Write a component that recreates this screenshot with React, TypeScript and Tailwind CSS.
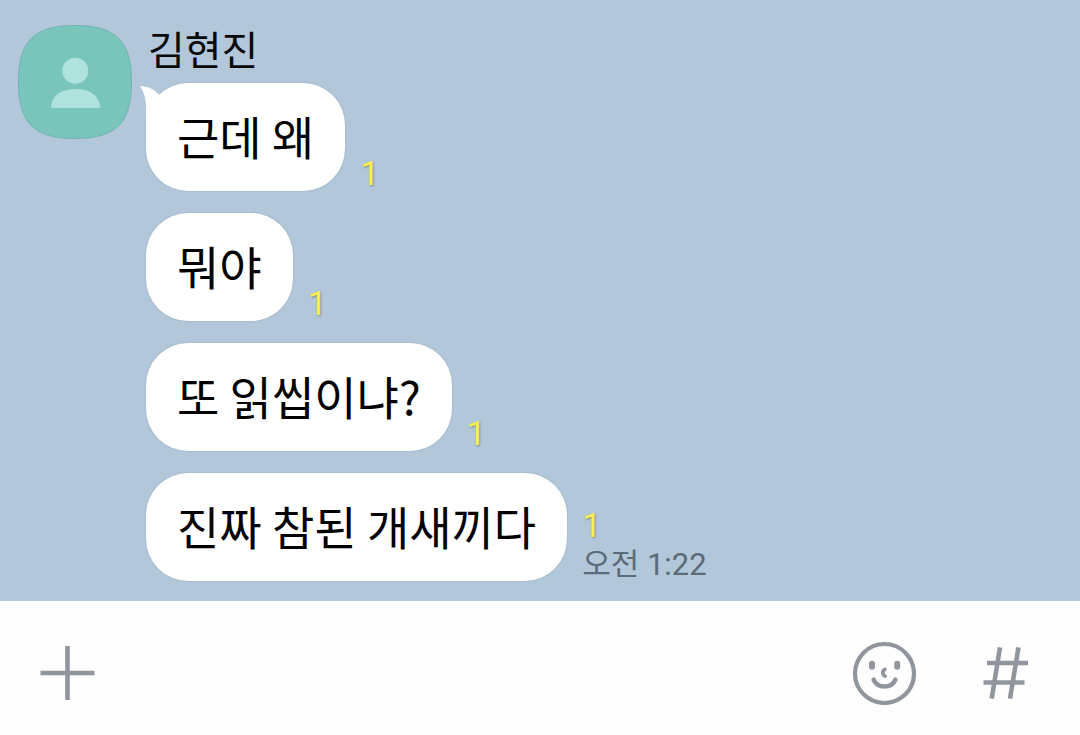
import { useState } from "react";

type Message = {
    id: number;
    text: string;
    unread: number;
    time?: string;
};

const messages: Message[] = [
    { id: 1, text: "근데 왜", unread: 1 },
    { id: 2, text: "뭐야", unread: 1 },
    { id: 3, text: "또 읽씹이냐?", unread: 1 },
    { id: 4, text: "진짜 참된 개새끼다", unread: 1, time: "오전 1:22" },
];

const Avatar = () => (
    <svg className="size-[114px] shrink-0" viewBox="0 0 114 114" aria-hidden="true">
        <path
            d="M57 .5C98 .5 113.5 16 113.5 57S98 113.5 57 113.5 .5 98 .5 57 16 .5 57 .5Z"
            fill="#7ac5bb"
            stroke="#70b3b1"
        />
        <circle cx="57.3" cy="45.8" r="13" fill="#afe2dc" />
        <path d="M33 83C33 71 43 64 57.5 64S82 71 82 83Z" fill="#afe2dc" />
    </svg>
);

// Small tail on the first bubble of a group
const Tail = () => (
    <svg className="absolute -left-1.5 top-0.5 h-10 w-6" viewBox="0 0 24 40" aria-hidden="true">
        <path d="M0 1C8 1 14 4.5 19 9.5L22 20L6 40V22C6 14 4 7 0 1Z" fill="#fff" />
    </svg>
);

const Bubble = ({ message, first }: { message: Message; first: boolean }) => (
    <li className="flex items-end gap-[15px]">
        <div className="relative rounded-[42px] bg-white px-[31px] pt-[22px] pb-[26px] shadow-[0_0_2px_rgba(90,110,130,0.35)]">
            {first && <Tail />}
            <p className="relative text-[46px] leading-[60px] text-black">{message.text}</p>
        </div>
        <div className="shrink-0 font-[Roboto,'Noto_Sans_CJK_KR',sans-serif]">
            <div className="text-[34px] leading-[36px] text-[#f7ee55] [text-shadow:1px_1px_2px_rgba(90,90,60,0.55)]">{message.unread}</div>
            {message.time && <time className="mt-1.5 block text-[31px] leading-[32px] text-[#5c6b78]">{message.time}</time>}
        </div>
    </li>
);

const InputBar = () => {
    const [input, setInput] = useState("");

    return (
        <footer className="flex items-center bg-[#fefefe] pt-10 pr-[50px] pb-[30px] pl-10 text-[#91959d]">
            <button type="button" aria-label="첨부" className="cursor-pointer">
                <svg className="size-14" viewBox="0 0 56 56" fill="none" stroke="currentColor" strokeWidth="4.6">
                    <path d="M27.5 1V55M.5 28H54.5" />
                </svg>
            </button>
            <input
                className="mx-6 h-16 min-w-0 flex-1 bg-transparent text-[40px] text-black outline-none"
                aria-label="메시지 입력"
                value={input}
                onChange={(e) => setInput(e.target.value)}
            />
            <div className="flex items-center gap-[66px]">
                <button type="button" aria-label="이모티콘" className="cursor-pointer">
                    <svg className="size-16" viewBox="0 0 64 64" fill="none" stroke="currentColor" strokeLinecap="round">
                        <circle cx="32.5" cy="32.5" r="29.5" strokeWidth="4.2" />
                        <path d="M20 22.8V25.8M45.2 22.8V25.8" strokeWidth="6" />
                        <path d="M32.8 28.5C30.2 29.5 30.2 34 33 35" strokeWidth="3.8" />
                        <path d="M21.6 38.7C25.8 47.8 39.2 47.8 43.4 38.7" strokeWidth="4.5" />
                    </svg>
                </button>
                <button type="button" aria-label="샵검색" className="cursor-pointer">
                    <svg className="h-14 w-12" viewBox="0 0 48 56" fill="none" stroke="currentColor" strokeWidth="4.6">
                        <path d="M18 2.4L9.7 53.7M36.5 2.4L28 53.7M5 18H46M1.5 37.5H42.5" />
                    </svg>
                </button>
            </div>
        </footer>
    );
};

export default function App() {
    return (
        <div className="flex min-h-screen flex-col bg-[#b2c7da] font-['Noto_Sans_CJK_KR',sans-serif]">
            <main className="flex flex-1 items-start gap-3.5 px-[18px] pt-[25px] pb-4">
                <Avatar />
                <section className="min-w-0">
                    <h1 className="pl-0.5 text-[40px] leading-[46px] text-[#08090b]">김현진</h1>
                    <ul className="mt-3 flex flex-col gap-[22px]">
                        {messages.map((message, i) => (
                            <Bubble key={message.id} message={message} first={i === 0} />
                        ))}
                    </ul>
                </section>
            </main>
            <InputBar />
        </div>
    );
}
